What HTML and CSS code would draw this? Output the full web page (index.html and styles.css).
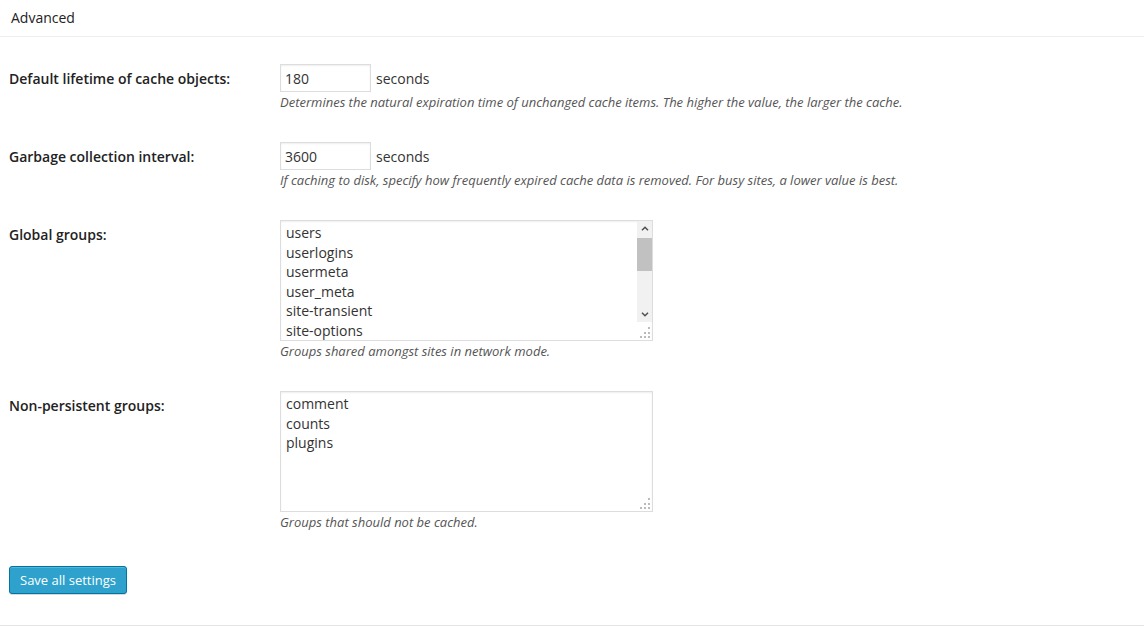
FILE: index.html
```html
<!DOCTYPE html>
<html>
<head>
	<title>Advanced</title>
	<link rel="stylesheet" href="styles.css">
</head>
<body>
	<div class="postbox">
		<h3 class="hndle">Advanced</h3>
		<form class="settings">
			<div class="row">
				<label class="row-label" for="lifetime">Default lifetime of cache objects:</label>
				<div class="row-field">
					<div class="inline">
						<input type="text" id="lifetime" class="small-text" value="180">
						<span>seconds</span>
					</div>
					<p class="description">Determines the natural expiration time of unchanged cache items. The higher the value, the larger the cache.</p>
				</div>
			</div>
			<div class="row">
				<label class="row-label" for="gc">Garbage collection interval:</label>
				<div class="row-field">
					<div class="inline">
						<input type="text" id="gc" class="small-text" value="3600">
						<span>seconds</span>
					</div>
					<p class="description">If caching to disk, specify how frequently expired cache data is removed. For busy sites, a lower value is best.</p>
				</div>
			</div>
			<div class="row">
				<label class="row-label" for="global">Global groups:</label>
				<div class="row-field">
					<div class="textarea-wrap">
						<textarea id="global" class="groups">users
userlogins
usermeta
user_meta
site-transient
site-options
site-lookup
blog-lookup
blog-details
rss
global-posts
blog-id-cache
networks
sites
site-details
useremail</textarea>
						<!-- scrollbar drawn by hand, the screenshot browser hides native ones -->
						<div class="scrollbar">
							<span class="scroll-arrow">
								<svg width="8" height="5" viewBox="0 0 8 5"><path d="M1 4.3L4 1.3L7 4.3" fill="none" stroke="#505050" stroke-width="1.5"/></svg>
							</span>
							<span class="scroll-thumb"></span>
							<span class="scroll-arrow down">
								<svg width="8" height="5" viewBox="0 0 8 5"><path d="M1 0.7L4 3.7L7 0.7" fill="none" stroke="#505050" stroke-width="1.5"/></svg>
							</span>
						</div>
					</div>
					<p class="description">Groups shared amongst sites in network mode.</p>
				</div>
			</div>
			<div class="row">
				<label class="row-label" for="nonpersistent">Non-persistent groups:</label>
				<div class="row-field">
					<textarea id="nonpersistent" class="groups">comment
counts
plugins</textarea>
					<p class="description">Groups that should not be cached.</p>
				</div>
			</div>
			<div class="submit">
				<button type="button" class="button-primary">Save all settings</button>
			</div>
		</form>
	</div>
</body>
</html>
```

FILE: styles.css
```css
body {
	margin: 0;
	background: #fff;
	font-family: "Open Sans", sans-serif;
	font-size: 13px;
	color: #444;
}

.postbox {
	height: 626px;
	box-sizing: border-box;
	border-bottom: 1px solid #e5e5e5;
}

.hndle {
	margin: 0;
	padding: 8px 11px;
	font-size: 14px;
	font-weight: 400;
	line-height: 20px;
	color: #222;
	border-bottom: 1px solid #eee;
}

.settings {
	padding: 12px 0 0 9px;
}

.row {
	display: grid;
	grid-template-columns: 271px 1fr;
	padding: 15px 0 16px;
}

.row-label {
	padding-top: 6px;
	font-size: 14px;
	font-weight: 600;
	line-height: 18px;
	color: #222;
}

.inline {
	display: flex;
	align-items: center;
	gap: 5px;
	font-size: 14px;
	color: #333;
}

.small-text {
	width: 91px;
	height: 28px;
	box-sizing: border-box;
	margin: 0;
	padding: 3px 4px;
	border: 1px solid #ddd;
	box-shadow: inset 0 1px 2px rgba(0, 0, 0, 0.07);
	font-family: "Open Sans", sans-serif;
	font-size: 14px;
	color: #333;
	outline: none;
}

.textarea-wrap {
	position: relative;
	width: 373px;
}

.groups {
	display: block;
	width: 373px;
	height: 121px;
	box-sizing: border-box;
	margin: 0;
	padding: 2px 5px;
	border: 1px solid #ddd;
	box-shadow: inset 0 1px 2px rgba(0, 0, 0, 0.07);
	font-family: "Open Sans", sans-serif;
	font-size: 14px;
	line-height: 19.6px;
	color: #333;
	outline: none;
}

.groups::-webkit-resizer {
	background: url("data:image/svg+xml,%3Csvg xmlns='http://www.w3.org/2000/svg' width='15' height='15' fill='%23bbb'%3E%3Crect x='11' y='2' width='2' height='2'/%3E%3Crect x='7' y='7' width='2' height='2'/%3E%3Crect x='11' y='7' width='2' height='2'/%3E%3Crect x='3' y='11' width='2' height='2'/%3E%3Crect x='7' y='11' width='2' height='2'/%3E%3Crect x='11' y='11' width='2' height='2'/%3E%3C/svg%3E") no-repeat;
}

.scrollbar {
	position: absolute;
	top: 1px;
	right: 1px;
	width: 15px;
	height: 101px;
	display: flex;
	flex-direction: column;
	background: #f1f1f1;
}

.scroll-arrow {
	height: 15px;
	display: flex;
	align-items: center;
	justify-content: center;
}

.scroll-arrow.down {
	margin-top: auto;
}

.scroll-thumb {
	height: 33px;
	margin-top: 2px;
	background: #c1c1c1;
}

.description {
	margin: 1px 0 0;
	font-size: 13px;
	font-style: italic;
	line-height: 18px;
	color: #555;
}

.submit {
	padding-top: 19px;
}

.button-primary {
	height: 28px;
	padding: 0 10px 1px;
	border: 1px solid #0074a2;
	border-radius: 3px;
	background: #2ea2cc;
	box-shadow: inset 0 1px 0 rgba(120, 200, 230, 0.5), 0 1px 0 rgba(0, 0, 0, 0.15);
	font-family: "Open Sans", sans-serif;
	font-size: 13px;
	line-height: 26px;
	color: #fff;
	cursor: pointer;
}
```
